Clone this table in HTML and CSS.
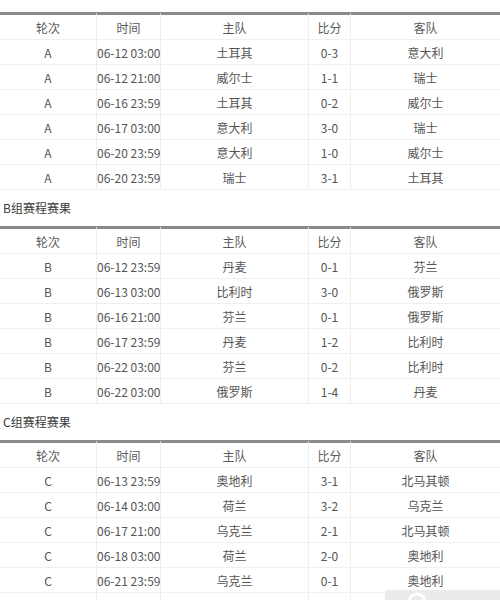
FILE: index.html
```html
<!DOCTYPE html>
<html lang="zh">
<head>
<meta charset="utf-8">
<title>赛程赛果</title>
<link rel="stylesheet" href="styles.css">
</head>
<body>
<div class="page">
  <div class="group-title">A组赛程赛果</div>
  <table class="schedule">
    <colgroup><col class="c1"><col class="c2"><col class="c3"><col class="c4"><col class="c5"></colgroup>
    <thead><tr><th>轮次</th><th>时间</th><th>主队</th><th>比分</th><th>客队</th></tr></thead>
    <tbody>
      <tr><td>A</td><td>06-12 03:00</td><td>土耳其</td><td>0-3</td><td>意大利</td></tr>
      <tr><td>A</td><td>06-12 21:00</td><td>威尔士</td><td>1-1</td><td>瑞士</td></tr>
      <tr><td>A</td><td>06-16 23:59</td><td>土耳其</td><td>0-2</td><td>威尔士</td></tr>
      <tr><td>A</td><td>06-17 03:00</td><td>意大利</td><td>3-0</td><td>瑞士</td></tr>
      <tr><td>A</td><td>06-20 23:59</td><td>意大利</td><td>1-0</td><td>威尔士</td></tr>
      <tr><td>A</td><td>06-20 23:59</td><td>瑞士</td><td>3-1</td><td>土耳其</td></tr>
    </tbody>
  </table>
  <div class="group-title">B组赛程赛果</div>
  <table class="schedule">
    <colgroup><col class="c1"><col class="c2"><col class="c3"><col class="c4"><col class="c5"></colgroup>
    <thead><tr><th>轮次</th><th>时间</th><th>主队</th><th>比分</th><th>客队</th></tr></thead>
    <tbody>
      <tr><td>B</td><td>06-12 23:59</td><td>丹麦</td><td>0-1</td><td>芬兰</td></tr>
      <tr><td>B</td><td>06-13 03:00</td><td>比利时</td><td>3-0</td><td>俄罗斯</td></tr>
      <tr><td>B</td><td>06-16 21:00</td><td>芬兰</td><td>0-1</td><td>俄罗斯</td></tr>
      <tr><td>B</td><td>06-17 23:59</td><td>丹麦</td><td>1-2</td><td>比利时</td></tr>
      <tr><td>B</td><td>06-22 03:00</td><td>芬兰</td><td>0-2</td><td>比利时</td></tr>
      <tr><td>B</td><td>06-22 03:00</td><td>俄罗斯</td><td>1-4</td><td>丹麦</td></tr>
    </tbody>
  </table>
  <div class="group-title">C组赛程赛果</div>
  <table class="schedule">
    <colgroup><col class="c1"><col class="c2"><col class="c3"><col class="c4"><col class="c5"></colgroup>
    <thead><tr><th>轮次</th><th>时间</th><th>主队</th><th>比分</th><th>客队</th></tr></thead>
    <tbody>
      <tr><td>C</td><td>06-13 23:59</td><td>奥地利</td><td>3-1</td><td>北马其顿</td></tr>
      <tr><td>C</td><td>06-14 03:00</td><td>荷兰</td><td>3-2</td><td>乌克兰</td></tr>
      <tr><td>C</td><td>06-17 21:00</td><td>乌克兰</td><td>2-1</td><td>北马其顿</td></tr>
      <tr><td>C</td><td>06-18 03:00</td><td>荷兰</td><td>2-0</td><td>奥地利</td></tr>
      <tr><td>C</td><td>06-21 23:59</td><td>乌克兰</td><td>0-1</td><td>奥地利</td></tr>
      <tr><td>C</td><td>06-22 03:00</td><td>荷兰</td><td>3-0</td><td>北马其顿</td></tr>
    </tbody>
  </table>
</div>
<div class="watermark">
  <svg width="40" height="20" viewBox="0 0 40 20"><circle cx="20" cy="14" r="8" fill="none" stroke="#fff" stroke-width="3"/></svg>
</div>
</body>
</html>
```
FILE: styles.css
```css
html, body {
  margin: 0;
  padding: 0;
  background: #fff;
}
body {
  font-family: "Noto Sans CJK SC", "Microsoft YaHei", sans-serif;
  font-size: 12px;
  color: #555;
  overflow: hidden;
}
.page {
  margin-top: -24px;
  width: 500px;
}
.group-title {
  height: 36px;
  line-height: 36px;
  padding-left: 3px;
  color: #3a3a3a;
}
.schedule {
  width: 500px;
  table-layout: fixed;
  border-collapse: separate;
  border-spacing: 0;
}
.c1 { width: 97px; }
.c2 { width: 64px; }
.c3 { width: 148px; }
.c4 { width: 42px; }
.c5 { width: 149px; }
.schedule th,
.schedule td {
  height: 24px;
  padding: 0;
  text-align: center;
  font-weight: normal;
  border-right: 1px solid #efefef;
  border-bottom: 1px solid #efefef;
  white-space: nowrap;
}
.schedule th {
  border-top: 3px solid #8a8a8a;
  color: #5a5a5a;
}
.schedule td:last-child,
.schedule th:last-child {
  border-right: none;
}
.watermark {
  position: fixed;
  left: 385px;
  top: 590px;
  width: 115px;
  height: 10px;
  background: #ebebeb;
  overflow: hidden;
}
.watermark svg {
  display: block;
  margin-left: 12px;
  margin-top: -2px;
}
```
